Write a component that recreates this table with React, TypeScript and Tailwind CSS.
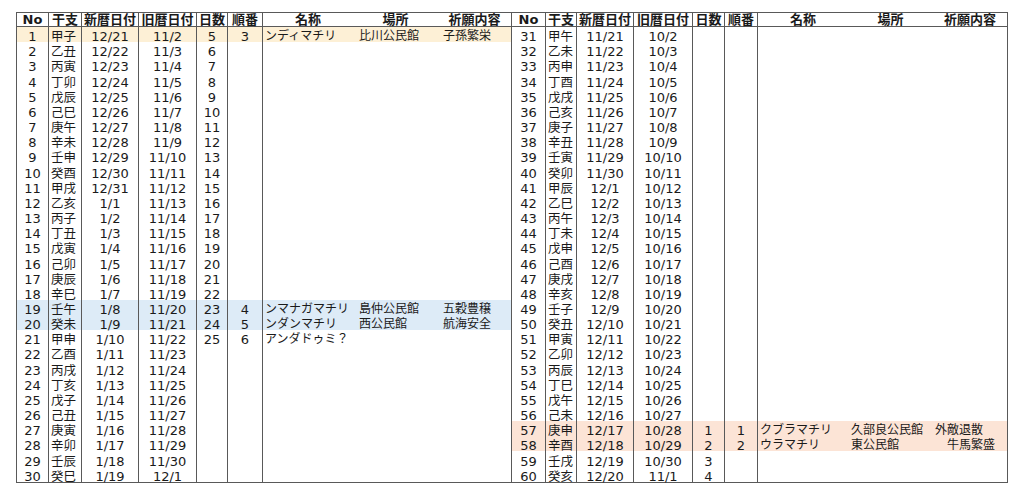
import React from "react";

type Row = {
  no: number;
  kanshi: string;
  shin: string;
  kyu: string;
  nissu?: string;
  jun?: string;
  name?: string;
  place?: string;
  wish?: string;
  wishPad?: string;
  bg?: string;
};

const stems = "甲乙丙丁戊己庚辛壬癸";
const branches = "子丑寅卯辰巳午未申酉戌亥";

function kanshi(i: number) {
  return stems[i % 10] + branches[i % 12];
}

const YELLOW = "bg-[#fdf0d6]";
const BLUE = "bg-[#ddebf7]";
const PEACH = "bg-[#fce4d6]";

const leftRows: Row[] = Array.from({ length: 30 }, (_, i) => {
  const r: Row = {
    no: i + 1,
    kanshi: kanshi(i),
    shin: i <= 10 ? `12/${21 + i}` : `1/${i - 10}`,
    kyu: i <= 28 ? `11/${2 + i}` : "12/1",
    nissu: i <= 20 ? String(5 + i) : "",
  };
  return r;
});
Object.assign(leftRows[0], { jun: "3", name: "ンディマチリ", place: "比川公民館", wish: "子孫繁栄", bg: YELLOW });
Object.assign(leftRows[18], { jun: "4", name: "ンマナガマチリ", place: "島仲公民館", wish: "五穀豊穣", bg: BLUE });
Object.assign(leftRows[19], { jun: "5", name: "ンダンマチリ", place: "西公民館", wish: "航海安全", bg: BLUE });
Object.assign(leftRows[20], { jun: "6", name: "アンダドゥミ？" });

const rightRows: Row[] = Array.from({ length: 30 }, (_, i) => {
  const r: Row = {
    no: i + 31,
    kanshi: kanshi(i + 30),
    shin: i <= 9 ? `11/${21 + i}` : `12/${i - 9}`,
    kyu: i <= 28 ? `10/${2 + i}` : "11/1",
  };
  return r;
});
Object.assign(rightRows[26], { nissu: "1", jun: "1", name: "クブラマチリ", place: "久部良公民館", wish: "外敵退散", wishPad: "pl-[2px]", bg: PEACH });
Object.assign(rightRows[27], { nissu: "2", jun: "2", name: "ウラマチリ", place: "東公民館", wish: "牛馬繁盛", wishPad: "pl-[14px]", bg: PEACH });
Object.assign(rightRows[28], { nissu: "3" });
Object.assign(rightRows[29], { nissu: "4" });

const cellBase = "border-r border-[#595959] flex items-end leading-[11px] overflow-visible whitespace-nowrap";
const numCell = cellBase + " justify-center text-[13px]";
const headCell = "border-r border-[#595959] flex items-end justify-center leading-[12px] text-[13px] font-bold whitespace-nowrap";

function Block({ rows, cols, side }: { rows: Row[]; cols: string; side: "left" | "right" }) {
  const placePad = side === "left" ? "pl-[6px]" : "pl-[3px]";
  return (
    <div className="flex flex-col">
      <div className={`grid ${cols} h-[14px] border-b border-[#595959]`}>
        <div className={headCell}>No</div>
        <div className={headCell}>干支</div>
        <div className={headCell}>新暦日付</div>
        <div className={headCell}>旧暦日付</div>
        <div className={headCell}>日数</div>
        <div className={headCell}>順番</div>
        <div className="border-r border-[#595959] grid grid-cols-[90px_85px_1fr] items-end leading-[12px] text-[13px] font-bold whitespace-nowrap">
          <div className="flex justify-center">名称</div>
          <div className="flex justify-center">場所</div>
          <div className="flex justify-center">祈願内容</div>
        </div>
      </div>
      {rows.map((r) => (
        <div key={r.no} className={`grid ${cols} h-[15.17px] ${r.bg ?? ""}`}>
          <div className={numCell}>{r.no}</div>
          <div className={cellBase + " pl-[2px] text-[12.5px]"}>{r.kanshi}</div>
          <div className={numCell}>{r.shin}</div>
          <div className={numCell}>{r.kyu}</div>
          <div className={numCell}>{r.nissu}</div>
          <div className={numCell}>{r.jun}</div>
          <div className="border-r border-[#595959] grid grid-cols-[90px_85px_1fr] items-end leading-[11px] whitespace-nowrap">
            <div className="pl-[2px]">{r.name}</div>
            <div className={placePad}>{r.place}</div>
            <div className={r.wishPad ?? "pl-[5px]"}>{r.wish}</div>
          </div>
        </div>
      ))}
    </div>
  );
}

export default function App() {
  return (
    <div className="w-[1024px] h-[499px] bg-white overflow-hidden font-['DejaVu_Sans','Noto_Sans_CJK_JP',sans-serif] text-[12px] text-[#1a1a1a]">
      <div className="ml-[16px] mt-[12px] inline-flex border-l border-t border-b border-[#595959]">
        <Block rows={leftRows} cols="grid-cols-[32px_33px_57px_58px_31px_35px_249px]" side="left" />
        <Block rows={rightRows} cols="grid-cols-[34px_31px_57px_59px_32px_33px_250px]" side="right" />
      </div>
    </div>
  );
}
